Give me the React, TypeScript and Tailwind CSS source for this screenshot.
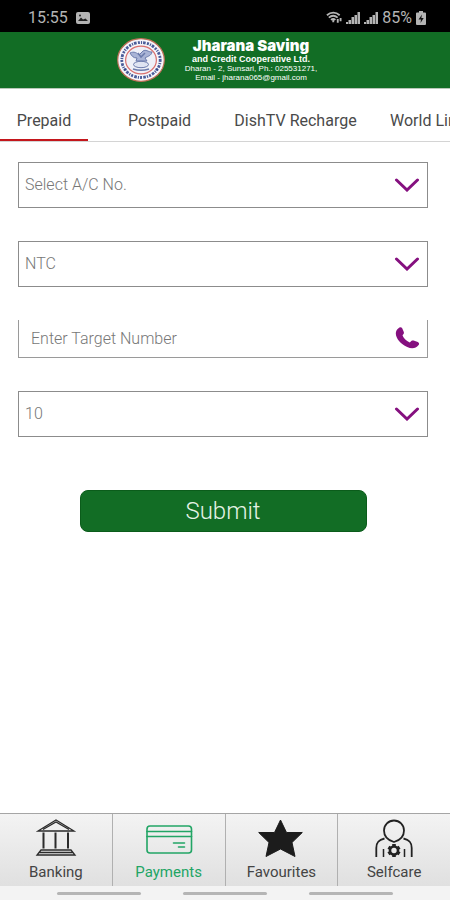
import { useState } from "react";
import type { ReactNode } from "react";

function StatusBar() {
  return (
    <div className="flex h-8 items-center justify-between bg-black pt-1 pr-6 pl-7 text-[#b4b4b4]">
      <div className="flex items-center gap-2 text-base">
        <span>15:55</span>
        <svg className="h-3 w-3.5" viewBox="0 0 14 12" aria-hidden="true">
          <rect width="14" height="12" rx="2" fill="currentColor" />
          <path d="M2 9 5 5.500l2 2 2.500-1L12 9z" fill="#222" />
          <circle cx="4" cy="3.500" r="1" fill="#222" />
        </svg>
      </div>
      <div className="flex items-center gap-1">
        <svg className="h-3.5 w-4" viewBox="0 0 17 14" fill="none" stroke="currentColor" strokeWidth="2" aria-hidden="true">
          <path d="M1 4c4-3.600 9.500-3.600 13.500 0M3 6.600c2.800-2.400 6.400-2.400 9.400 0M5.300 9c1.500-1.200 3.200-1.200 4.700 0" />
          <path d="M7.700 9v2.500M12.500 8v4M15.500 7v3.500" />
        </svg>
        <Signal />
        <Signal />
        <span className="text-base">85%</span>
        <svg className="h-3.5 w-2.5" viewBox="0 0 10 14" aria-hidden="true">
          <path d="M3 0h4v1.500h2q1 0 1 1V13q0 1-1 1H1q-1 0-1-1V2.500q0-1 1-1h2z" fill="currentColor" />
          <path d="M6 3.500 2.500 8.500H5l-.5 3.500 3.200-5H5.300z" fill="#111" />
        </svg>
      </div>
    </div>
  );
}

function Signal() {
  return (
    <svg className="h-3 w-3.5" viewBox="0 0 14 12" fill="currentColor" aria-hidden="true">
      <path d="M0 10h2v2H0zM2.500 8h2.500v4H2.500zM5.500 5H8v7H5.500zM8.500 3H11v9H8.500zM11.500 0H14v12h-2.500z" />
    </svg>
  );
}

function Emblem() {
  return (
    <svg className="h-11 w-12 shrink-0" viewBox="0 0 48 44" role="img" aria-label="Cooperative emblem">
      <ellipse cx="24" cy="22" rx="23.300" ry="21.300" fill="#f6f6fb" stroke="#c0705a" strokeWidth="1.200" />
      <ellipse cx="24" cy="22" rx="19.200" ry="17.500" fill="none" stroke="#4a5c99" strokeWidth="2.800" strokeDasharray="2 1.100 1.200 1 2.600 1.300" />
      <ellipse cx="24" cy="22" rx="15.400" ry="13.800" fill="#eef0f8" stroke="#d9706e" strokeWidth="1.200" />
      <g stroke="#6b7bac" fill="#a9b4d6">
        <path d="M13 15c4-2 7 0 9 2l4-4c3-2 5 1 9 1-1 4-4 4-7 6l2 3H19l1-3c-4 0-5-2-7-5z" />
        <ellipse cx="24" cy="26.500" rx="7.500" ry="3.200" fill="#dfe4f2" />
        <path d="M16 31q8 2.500 16 0M21 15l3 4 4-4" fill="none" strokeWidth="1.500" />
      </g>
      <path d="M7 30.500h2.500v2H7zM38.500 30.500H41v2h-2.500z" fill="#34498c" />
    </svg>
  );
}

function Header() {
  return (
    <header className="flex h-[57px] items-center justify-center gap-5 border-b border-[#b9c8b9] bg-[#126d25] pr-4 text-center text-white">
      <Emblem />
      <div className="font-['Liberation_Sans',Arial,sans-serif] font-bold">
        <h1 className="font-[Inter,sans-serif] text-[15px] leading-4 font-black">Jharana Saving</h1>
        <p className="text-[9px] leading-[10px]">and Credit Cooperative Ltd.</p>
        <p className="text-[8px] leading-[9px] font-normal">Dharan - 2, Sunsari, Ph.: 025531271,</p>
        <p className="text-[8px] leading-[9px] font-normal">Email - jharana065@gmail.com</p>
      </div>
    </header>
  );
}

const tabs = [
  { name: "Prepaid", size: "w-[88px] mr-3.5" },
  { name: "Postpaid", size: "w-[115px]" },
  { name: "DishTV Recharge", size: "w-[157px]" },
  { name: "World Link", size: "px-4" },
];

function Tabs() {
  const [active, setActive] = useState("Prepaid");
  return (
    <div role="tablist" className="flex h-[53px] overflow-hidden border-b border-[#d4d4d4] pt-3.5">
      {tabs.map((tab) => (
        <button
          key={tab.name}
          type="button"
          role="tab"
          aria-selected={active === tab.name}
          onClick={() => setActive(tab.name)}
          className={`${tab.size} shrink-0 border-b-2 whitespace-nowrap text-base text-[#4a4a4a] ${
            active === tab.name ? "border-[#c4161c]" : "border-transparent"
          }`}
        >
          {tab.name}
        </button>
      ))}
    </div>
  );
}

function SelectField({ label, options }: { label: string; options: string[] }) {
  return (
    <div className="relative">
      <select
        aria-label={label}
        className="block h-[46px] w-full appearance-none border border-[#8c8c8c] bg-white pr-10 pl-1.5 text-base font-light text-[#777] outline-none"
      >
        {options.map((o) => (
          <option key={o}>{o}</option>
        ))}
      </select>
      <svg
        className="pointer-events-none absolute top-4 right-2 h-3.5 w-[26px]"
        viewBox="0 0 26 14"
        fill="none"
        stroke="#85107f"
        strokeWidth="3"
        strokeLinecap="round"
        aria-hidden="true"
      >
        <path d="M2.500 2 13 12 23.500 2" />
      </svg>
    </div>
  );
}

function NavItem({ label, icon, active }: { label: string; icon: ReactNode; active?: boolean }) {
  return (
    <button
      type="button"
      aria-current={active ? "page" : undefined}
      className={`flex h-[72px] flex-1 flex-col items-center border-r border-[#b0b0b0] pt-1 text-[15px] leading-5 last:border-r-0 ${
        active ? "text-[#22a565]" : "text-[#444]"
      }`}
    >
      <svg className="mb-1 h-10 w-12" viewBox="0 0 48 40" aria-hidden="true">
        {icon}
      </svg>
      {label}
    </button>
  );
}

const bankIcon = (
  <g fill="none" stroke="#2b2b2b" strokeWidth="1.500">
    <path d="M6 13 24 2l18 11zM11 11.500l13-7.500 13 7.500" strokeWidth="1.300" />
    <path d="M11.500 14.500V30.500M23.500 14.500V30.500M36 14.500V30.500" strokeWidth="2" />
    <path d="M5 37h38l-4-5H9zM7 34.500h34" strokeWidth="1.300" />
  </g>
);

const cardIcon = (
  <g fill="none" stroke="#22a565" strokeWidth="1.600" strokeLinecap="round">
    <rect x="2" y="8" width="44.500" height="27" rx="3" />
    <path d="M2 13.500h44.500M2 18.500h44.500M28.500 25h11M33.500 29h6" />
  </g>
);

const starIcon = (
  <path
    d="M23.500 2 29.500 14.500H45.300L35 24.500 38 38.500 23.500 31 9 38.500l3-14L1.700 14.500H17.500z"
    fill="#1c1c1c"
    stroke="#1c1c1c"
    strokeLinejoin="round"
  />
);

const selfcareIcon = (
  <g fill="none" stroke="#222" strokeWidth="1.800">
    <path d="M24 24C17 22 14 18 14 12.500a10 10 0 0 1 20 0C34 18 31 22 24 24z" />
    <path d="M14.500 20.500C8 22 6.300 25 6.300 30v9M33.500 20.500C40 22 41.700 25 41.700 30v9" />
    <path d="M13.500 31v8M34.500 31v8" strokeWidth="1.500" />
    <circle cx="24" cy="32.500" r="4" strokeWidth="2.600" />
    <path
      d="M24 26v3M24 36v3M18.400 29.200l2.600 1.500M27 34.200l2.600 1.600M29.600 29.200 27 30.700M21 34.200l-2.600 1.600"
      strokeWidth="3.600"
    />
  </g>
);

export default function App() {
  return (
    <div className="flex min-h-screen flex-col bg-white font-[Roboto,sans-serif]">
      <StatusBar />
      <Header />
      <Tabs />
      <main className="flex-1 pt-5">
        <form className="flex flex-col pr-[22px] pl-[18px]" onSubmit={(e) => e.preventDefault()}>
          <div className="flex flex-col gap-[33px]">
            <SelectField label="Account number" options={["Select A/C No."]} />
            <SelectField label="Operator" options={["NTC", "Ncell"]} />
            <div className="relative">
              <input
                type="tel"
                aria-label="Target number"
                placeholder="Enter Target Number"
                className="block h-[38px] w-full border border-t-0 border-[#9a9a9a] pr-10 pl-3 text-base font-light text-[#777] outline-none placeholder:text-[#777]"
              />
              <svg className="pointer-events-none absolute top-1.5 right-2 h-6 w-[26px]" viewBox="0 0 26 24" aria-hidden="true">
                <path
                  d="M4.500 2.200C5.500 1 7.500 1 8.200 2.200l1.500 3.600c.6 1.200.2 2.400-1.200 3.400.8 2.900 3.500 5.500 7.300 7.200 1.200-1.700 2.500-2.300 3.800-1.900l4.200 1.400c1.500.7 1.700 2.200.6 3.400-2.400 3.200-6.600 4-11.200 1.800C6.500 18 2 12.500 1.800 7.500c0-2.200 1-4 2.700-5.300z"
                  fill="#85107f"
                />
              </svg>
            </div>
            <SelectField label="Amount" options={["10", "20", "50", "100"]} />
          </div>
          <button
            type="submit"
            className="mt-[53px] h-[42px] w-[70%] self-center rounded-lg border border-[#0b5c1b] bg-[#126d25] text-2xl font-light text-[#e6f3e6]"
          >
            Submit
          </button>
        </form>
      </main>
      <nav className="flex border-t border-[#a5a5a5] bg-linear-to-b from-[#f3f3f3] to-[#e0e0e0]">
        <NavItem label="Banking" icon={bankIcon} />
        <NavItem label="Payments" icon={cardIcon} active />
        <NavItem label="Favourites" icon={starIcon} />
        <NavItem label="Selfcare" icon={selfcareIcon} />
      </nav>
      <div className="flex h-3.5 items-center justify-center gap-[42px] bg-[#f3f3f3]">
        <span className="h-[3px] w-[84px] rounded-full bg-[#b5b5b5]" />
        <span className="h-[3px] w-[84px] rounded-full bg-[#b5b5b5]" />
        <span className="h-[3px] w-[84px] rounded-full bg-[#b5b5b5]" />
      </div>
    </div>
  );
}
